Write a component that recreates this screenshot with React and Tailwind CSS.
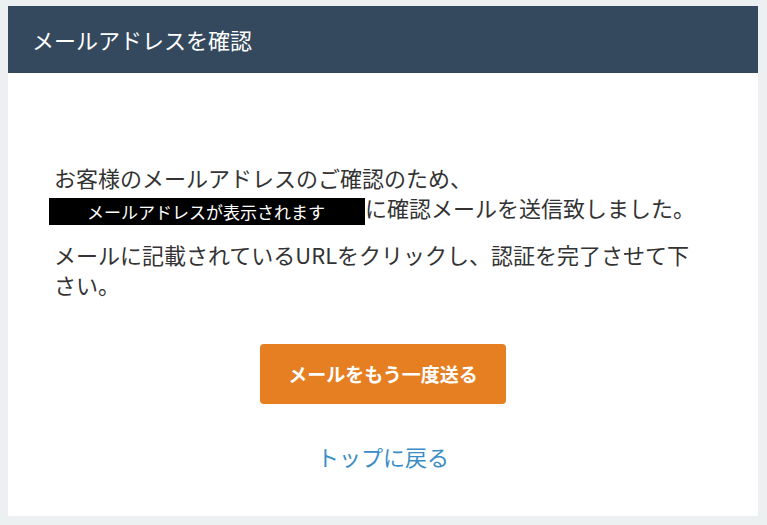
export default function App() {
  return (
    <div
      className="min-h-[525px] bg-[#ecf0f1] px-2 pt-[6px] pb-[9px]"
      style={{ fontFamily: '"Noto Sans CJK JP", "Noto Sans", sans-serif' }}
    >
      <div className="w-[750px] bg-white">
        <div className="flex h-[67px] items-center bg-[#34495e] px-6 text-[22px] text-white">
          メールアドレスを確認
        </div>
        <div className="h-[443px] px-[46px] pt-[89px] text-[22px] leading-[30px] text-[#333]">
          <div className="pr-[6px]">
            <p>
              お客様のメールアドレスのご確認のため、
              <br />
              <span className="-ml-[5px] inline-block h-[27px] w-[316px] bg-black pl-[38px] align-middle text-[17px] leading-[27px] text-white">
                メールアドレスが表示されます
              </span>
              に確認メールを送信致しました。
            </p>
            <p className="mt-[14px]">
              メールに記載されているURLをクリックし、認証を完了させて下さい。
            </p>
          </div>
          <div className="mt-[45px] flex justify-center">
            <button className="h-[60px] w-[246px] rounded bg-[#e67e22] text-[19px] font-bold text-white">
              メールをもう一度送る
            </button>
          </div>
          <div className="mt-[37px] text-center leading-[30px]">
            <a href="#" className="text-[22px] text-[#3a8dc6]">
              トップに戻る
            </a>
          </div>
        </div>
      </div>
    </div>
  )
}
